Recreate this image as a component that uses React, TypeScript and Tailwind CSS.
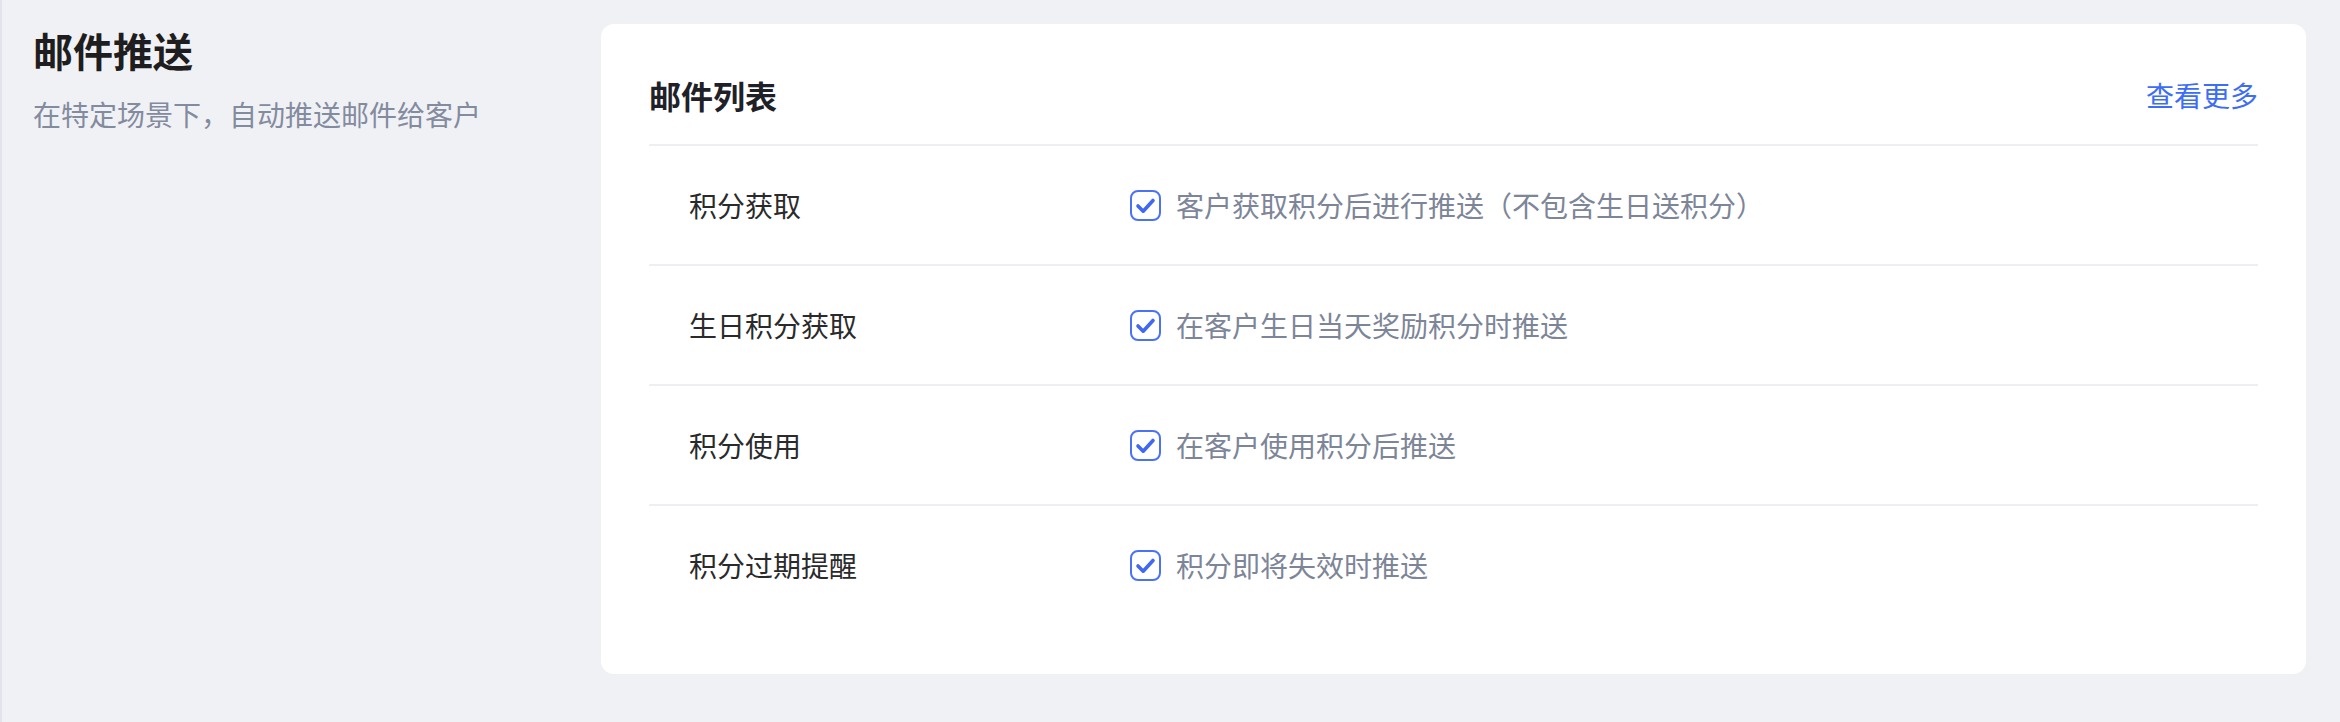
import React from "react";

const rows = [
  { label: "积分获取", desc: "客户获取积分后进行推送（不包含生日送积分）" },
  { label: "生日积分获取", desc: "在客户生日当天奖励积分时推送" },
  { label: "积分使用", desc: "在客户使用积分后推送" },
  { label: "积分过期提醒", desc: "积分即将失效时推送" },
];

function Check() {
  return (
    <svg width="31" height="31" viewBox="0 0 31 31" className="shrink-0">
      <rect x="1" y="1" width="29" height="29" rx="7" fill="#ffffff" stroke="#4a72f5" strokeWidth="2" />
      <path d="M8 16 L13.2 21.2 L23 10.5" fill="none" stroke="#3f69f2" strokeWidth="3.6" strokeLinecap="round" strokeLinejoin="round" />
    </svg>
  );
}

export default function App() {
  return (
    <div className="min-h-screen w-full bg-[#f0f1f5] border-l-2 border-[#e3e4ea] font-['Noto_Sans_CJK_SC','Noto_Sans',sans-serif]">
      <div className="flex pl-[31px] pr-[34px] pt-[24px] gap-[32px]">
        <div className="w-[536px] shrink-0 pt-[2px]">
          <h1 className="text-[40px] leading-[48px] font-bold text-[#1e1e20]">邮件推送</h1>
          <p className="mt-[20px] text-[28px] leading-[40px] text-[#838b9e]">在特定场景下，自动推送邮件给客户</p>
        </div>
        <div className="flex-1 bg-white rounded-[13px] px-[48px] pt-[47px] pb-[50px]">
          <div className="flex items-center justify-between h-[48px] pb-[25px] border-b-2 border-[#eeeff3] box-content">
            <h2 className="text-[32px] leading-[48px] font-bold text-[#1f2128]">邮件列表</h2>
            <a className="text-[28px] leading-[40px] text-[#3d6cf5] cursor-pointer">查看更多</a>
          </div>
          <div className="flex flex-col">
            {rows.map((r, i) => (
              <div
                key={r.label}
                className={`flex items-center h-[118px] pl-[40px] box-content ${i < rows.length - 1 ? "border-b-2 border-[#eeeff3]" : ""}`}
              >
                <div className="w-[441px] shrink-0 text-[28px] leading-[40px] text-[#2a2a2c]">{r.label}</div>
                <div className="flex items-center gap-[15px]">
                  <Check />
                  <span className="text-[28px] leading-[40px] text-[#7d8598]">{r.desc}</span>
                </div>
              </div>
            ))}
          </div>
        </div>
      </div>
    </div>
  );
}
